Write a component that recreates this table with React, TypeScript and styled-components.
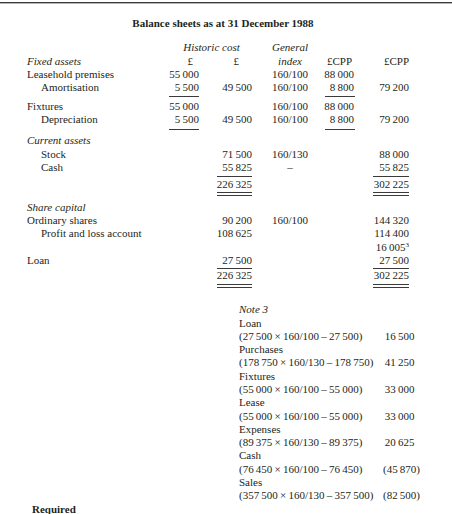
import React from "react";
import styled, { createGlobalStyle } from "styled-components";

const Global = createGlobalStyle`
  html, body { margin: 0; padding: 0; background: #ffffff; }
  body {
    font-family: "Liberation Serif", "Times New Roman", serif;
    color: #231f20;
  }
`;

const COLS = "138px 34px 53px 68px 34px 55px";
const T = "\u2009";

const Page = styled.div`
  width: 452px;
  height: 514px;
  overflow: hidden;
  font-size: 11px;
  line-height: 13.3px;
`;

const TopRule = styled.div`
  margin-top: 2px;
  height: 1px;
  background: #3a3a3a;
  box-shadow: 0 1px 0 #b5b5b5;
`;

const Title = styled.h1`
  margin: 14px 0 0 0;
  padding: 0 33px 0 27px;
  font-size: 11px;
  line-height: 13.3px;
  font-weight: bold;
  text-align: center;
`;

const Table = styled.div`
  margin-top: 10.3px;
  padding-left: 27px;
  display: flex;
  flex-direction: column;
`;

const Row = styled.div<{ $mt?: number }>`
  display: grid;
  grid-template-columns: ${COLS};
  height: 13.3px;
  margin-top: ${(p) => p.$mt ?? 0}px;
  white-space: nowrap;
`;

const Label = styled.div<{ $indent?: boolean; $italic?: boolean }>`
  grid-column: 1;
  padding-left: ${(p) => (p.$indent ? 14 : 0)}px;
  font-style: ${(p) => (p.$italic ? "italic" : "normal")};
`;

const Amount = styled.div<{ $col: number; $pr?: number }>`
  grid-column: ${(p) => p.$col};
  text-align: right;
  padding-right: ${(p) => p.$pr ?? 0}px;
`;

const Heading = styled.div<{ $from: number; $to: number; $pl?: number }>`
  grid-column: ${(p) => p.$from} / ${(p) => p.$to};
  text-align: center;
  font-style: italic;
  padding-left: ${(p) => p.$pl ?? 0}px;
`;

const IndexCell = styled.div<{ $italic?: boolean }>`
  grid-column: 4;
  text-align: center;
  padding-left: 8px;
  font-style: ${(p) => (p.$italic ? "italic" : "normal")};
`;

const RuleRow = styled.div<{ $h: number }>`
  display: grid;
  grid-template-columns: ${COLS};
  height: ${(p) => p.$h}px;
  align-items: start;
`;

const Rule = styled.div<{ $col: number; $w: number; $t: number; $double?: boolean; $shift?: number }>`
  grid-column: ${(p) => p.$col};
  justify-self: end;
  width: ${(p) => p.$w}px;
  margin-top: ${(p) => p.$t}px;
  margin-right: ${(p) => -(p.$shift ?? 0)}px;
  height: ${(p) => (p.$double ? 2 : 0)}px;
  border-top: 1px solid #3a3a3a;
  border-bottom: ${(p) => (p.$double ? "1px solid #3a3a3a" : "none")};
`;

const Sup = styled.sup`
  font-size: 7px;
  line-height: 0;
  vertical-align: 4px;
`;

const Notes = styled.div`
  margin-top: 0;
  margin-left: 239px;
  display: grid;
  grid-template-columns: 144px 35px;
  grid-auto-rows: 13.3px;
  white-space: nowrap;
`;

const NoteHead = styled.div<{ $italic?: boolean }>`
  grid-column: 1 / 3;
  font-style: ${(p) => (p.$italic ? "italic" : "normal")};
`;

const NoteExpr = styled.div`
  grid-column: 1;
`;

const NoteValue = styled.div<{ $paren?: boolean }>`
  grid-column: 2;
  text-align: right;
  padding-right: ${(p) => (p.$paren ? 0 : 3.5)}px;
`;

const Required = styled.div`
  padding-left: 32px;
  font-weight: bold;
`;

type Cell = { col: number; text: React.ReactNode; pr?: number };

type Line = { label?: string; indent?: boolean; italic?: boolean; index?: string; cells?: Cell[]; mt?: number };

const n = (s: string) => s.replace(/ /g, T);

const DataRow = ({ label, indent, italic, index, cells = [], mt }: Line) => (
  <Row $mt={mt}>
    {label !== undefined && (
      <Label $indent={indent} $italic={italic}>
        {label}
      </Label>
    )}
    {cells
      .filter((c) => c.col < 4)
      .map((c) => (
        <Amount key={c.col} $col={c.col} $pr={c.pr}>
          {c.text}
        </Amount>
      ))}
    {index !== undefined && <IndexCell>{index}</IndexCell>}
    {cells
      .filter((c) => c.col > 4)
      .map((c) => (
        <Amount key={c.col} $col={c.col} $pr={c.pr}>
          {c.text}
        </Amount>
      ))}
  </Row>
);

const notes: { label: string; expr: string; value: string }[] = [
  { label: "Loan", expr: "(27 500 × 160/100 – 27 500)", value: "16 500" },
  { label: "Purchases", expr: "(178 750 × 160/130 – 178 750)", value: "41 250" },
  { label: "Fixtures", expr: "(55 000 × 160/100 – 55 000)", value: "33 000" },
  { label: "Lease", expr: "(55 000 × 160/100 – 55 000)", value: "33 000" },
  { label: "Expenses", expr: "(89 375 × 160/130 – 89 375)", value: "20 625" },
  { label: "Cash", expr: "(76 450 × 160/100 – 76 450)", value: "(45 870)" },
  { label: "Sales", expr: "(357 500 × 160/130 – 357 500)", value: "(82 500)" },
];

export default function App() {
  return (
    <Page>
      <Global />
      <TopRule />
      <Title>Balance sheets as at 31 December 1988</Title>
      <Table>
        <Row>
          <Heading $from={2} $to={4} $pl={6}>
            Historic cost
          </Heading>
          <Heading $from={4} $to={5} $pl={8}>
            General
          </Heading>
        </Row>
        <Row $mt={1}>
          <Label $italic>Fixed assets</Label>
          <Amount $col={2} $pr={6}>£</Amount>
          <Amount $col={3} $pr={13}>£</Amount>
          <IndexCell $italic>index</IndexCell>
          <Amount $col={5} $pr={2}>£CPP</Amount>
          <Amount $col={6}>£CPP</Amount>
        </Row>
        <DataRow
          label="Leasehold premises"
          index="160/100"
          cells={[
            { col: 2, text: n("55 000") },
            { col: 5, text: n("88 000") },
          ]}
        />
        <DataRow
          label="Amortisation"
          indent
          index="160/100"
          cells={[
            { col: 2, text: n("5 500") },
            { col: 3, text: n("49 500") },
            { col: 5, text: n("8 800") },
            { col: 6, text: n("79 200") },
          ]}
        />
        <RuleRow $h={5.2}>
          <Rule $col={2} $w={30} $t={1.5} />
          <Rule $col={5} $w={30} $t={1.5} $shift={1} />
        </RuleRow>
        <DataRow
          label="Fixtures"
          index="160/100"
          cells={[
            { col: 2, text: n("55 000") },
            { col: 5, text: n("88 000") },
          ]}
        />
        <DataRow
          label="Depreciation"
          indent
          index="160/100"
          cells={[
            { col: 2, text: n("5 500") },
            { col: 3, text: n("49 500") },
            { col: 5, text: n("8 800") },
            { col: 6, text: n("79 200") },
          ]}
        />
        <RuleRow $h={7.7}>
          <Rule $col={2} $w={30} $t={2.5} />
          <Rule $col={5} $w={30} $t={2.5} $shift={1} />
        </RuleRow>
        <DataRow label="Current assets" italic />
        <DataRow
          label="Stock"
          indent
          index="160/130"
          cells={[
            { col: 3, text: n("71 500") },
            { col: 6, text: n("88 000") },
          ]}
        />
        <DataRow
          label="Cash"
          indent
          index="–"
          cells={[
            { col: 3, text: n("55 825") },
            { col: 6, text: n("55 825") },
          ]}
        />
        <RuleRow $h={3.4}>
          <Rule $col={3} $w={35} $t={1.5} />
          <Rule $col={6} $w={36} $t={1.5} />
        </RuleRow>
        <DataRow
          cells={[
            { col: 3, text: n("226 325") },
            { col: 6, text: n("302 225") },
          ]}
        />
        <RuleRow $h={10}>
          <Rule $col={3} $w={35} $t={1.2} $double />
          <Rule $col={6} $w={36} $t={1.2} $double />
        </RuleRow>
        <DataRow label="Share capital" italic />
        <DataRow
          label="Ordinary shares"
          index="160/100"
          cells={[
            { col: 3, text: n("90 200") },
            { col: 6, text: n("144 320") },
          ]}
        />
        <DataRow
          label="Profit and loss account"
          indent
          cells={[
            { col: 3, text: n("108 625") },
            { col: 6, text: n("114 400") },
          ]}
        />
        <DataRow
          cells={[
            {
              col: 6,
              text: (
                <>
                  {n("16 005")}
                  <Sup>3</Sup>
                </>
              ),
            },
          ]}
        />
        <DataRow
          label="Loan"
          cells={[
            { col: 3, text: n("27 500") },
            { col: 6, text: n("27 500") },
          ]}
        />
        <RuleRow $h={2}>
          <Rule $col={3} $w={35} $t={0.5} />
          <Rule $col={6} $w={36} $t={0.5} />
        </RuleRow>
        <DataRow
          cells={[
            { col: 3, text: n("226 325") },
            { col: 6, text: n("302 225") },
          ]}
        />
        <RuleRow $h={20.6}>
          <Rule $col={3} $w={35} $t={1.2} $double />
          <Rule $col={6} $w={36} $t={1.2} $double />
        </RuleRow>
      </Table>
      <Notes>
        <NoteHead $italic>Note 3</NoteHead>
        {notes.map((note) => (
          <React.Fragment key={note.label}>
            <NoteHead>{note.label}</NoteHead>
            <NoteExpr>{n(note.expr)}</NoteExpr>
            <NoteValue $paren={note.value.startsWith("(")}>{n(note.value)}</NoteValue>
          </React.Fragment>
        ))}
      </Notes>
      <Required>Required</Required>
    </Page>
  );
}
